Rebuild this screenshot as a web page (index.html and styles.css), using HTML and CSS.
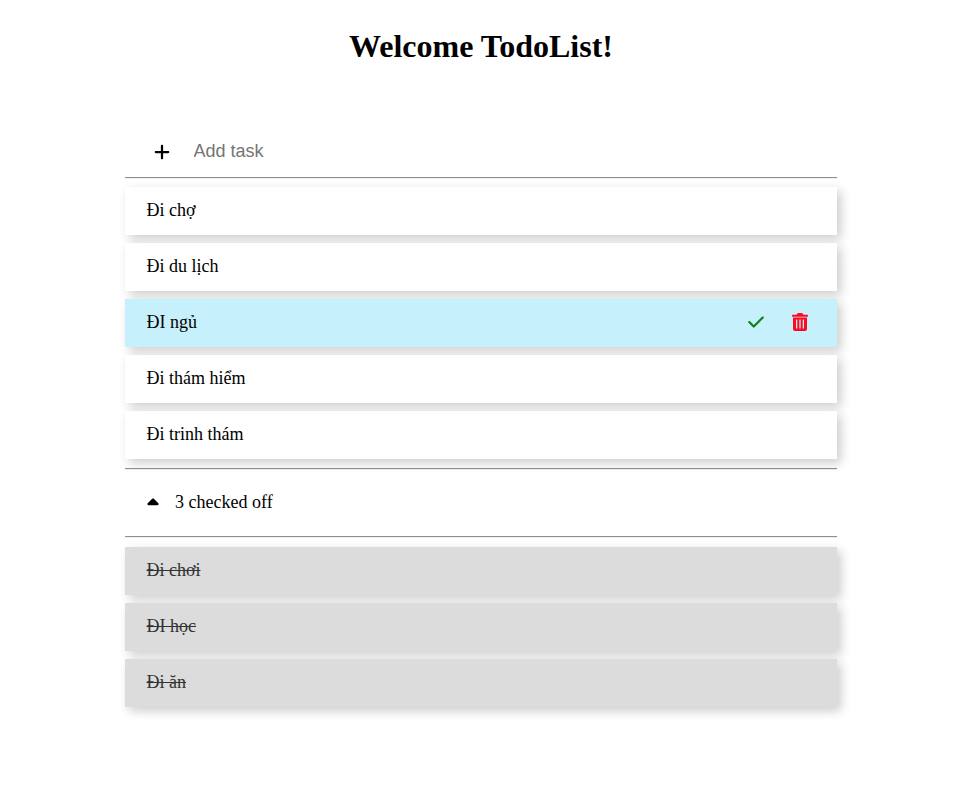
FILE: index.html
```html
<!DOCTYPE html>
<html lang="vi">
<head>
<meta charset="utf-8">
<title>TodoList</title>
<link rel="stylesheet" href="styles.css">
</head>
<body>
<h1 class="title">Welcome TodoList!</h1>
<main class="todo">
  <form class="add">
    <svg class="add-icon" viewBox="0 0 448 512"><path d="M256 80c0-17.700-14.300-32-32-32s-32 14.300-32 32v144H48c-17.700 0-32 14.300-32 32s14.300 32 32 32h144v144c0 17.700 14.300 32 32 32s32-14.300 32-32V288h144c17.700 0 32-14.300 32-32s-14.300-32-32-32H256V80z"/></svg>
    <input class="add-input" type="text" placeholder="Add task">
  </form>
  <hr class="rule">
  <ul class="list">
    <li class="task">Đi chợ</li>
    <li class="task">Đi du lịch</li>
    <li class="task active">ĐI ngủ
      <span class="actions">
        <svg class="check" viewBox="0 0 448 512"><path d="M438.600 105.400c12.500 12.500 12.500 32.800 0 45.300l-256 256c-12.500 12.500-32.800 12.500-45.300 0l-128-128c-12.500-12.500-12.500-32.800 0-45.300s32.800-12.500 45.300 0L160 338.700 393.400 105.400c12.500-12.500 32.800-12.500 45.300 0z"/></svg>
        <svg class="trash" viewBox="0 0 16 18"><path fill-rule="evenodd" d="M5.300.6Q5.600 0 6.300 0h3.400q.7 0 1 .6l.6 1.100h4q.7 0 .7.700v.7q0 .7-.7.700H.7Q0 3.800 0 3.100v-.7q0-.7.700-.7h4zM1 4.500h14V16q0 2-2 2H3q-2 0-2-2zM4 6.500v9h1.300v-9zM7.350 6.500v9h1.300v-9zM10.700 6.500v9H12v-9z"/></svg>
      </span>
    </li>
    <li class="task">Đi thám hiểm</li>
    <li class="task">Đi trinh thám</li>
  </ul>
  <hr class="rule">
  <div class="summary">
    <svg class="caret" viewBox="0 0 320 512"><path d="M182.600 137.400c-12.500-12.500-32.800-12.500-45.300 0l-128 128c-9.200 9.200-11.900 22.900-6.900 34.900S19.100 320 32 320h256c12.900 0 24.600-7.800 29.600-19.800s2.200-25.700-6.900-34.900l-128-128z"/></svg>
    <span>3 checked off</span>
  </div>
  <hr class="rule">
  <ul class="list finished">
    <li class="task done">Đi chơi</li>
    <li class="task done">ĐI học</li>
    <li class="task done">Đi ăn</li>
  </ul>
</main>
</body>
</html>
```
FILE: styles.css
```css
* { box-sizing: border-box; }
body {
  margin: 0;
  padding-top: 28px;
  background: #fff;
  color: #000;
  font-family: "Liberation Serif", "Times New Roman", serif;
  font-size: 18px;
}
.title {
  margin: 0 0 61px;
  padding-left: 4px;
  font-size: 32px;
  line-height: 37px;
  text-align: center;
}
.todo { width: 712px; margin-left: 125px; }
.add {
  display: flex;
  align-items: center;
  height: 51px;
  padding-left: 29px;
}
.add-icon { width: 16px; height: 18px; margin-right: 21.5px; }
.add-input {
  flex: 1;
  border: 0;
  padding: 1px 2px;
  background: transparent;
  font: 18px "Liberation Sans", Arial, sans-serif;
}
.rule { height: 2px; margin: 0; border: 0; border-top: 1px solid #8f8f8f; border-bottom: 1px solid #f0f0f0; }
.list {
  display: grid;
  gap: 8px;
  margin: 0;
  padding: 8px 0 9px;
  list-style: none;
}
.finished { padding-top: 9px; padding-bottom: 40px; }
.task {
  display: flex;
  align-items: center;
  justify-content: space-between;
  height: 48px;
  padding: 0 29px 2px 21.5px;
  background: #fff;
  box-shadow: 4px 4px 10px rgba(0, 0, 0, .2);
}
.active { background: #c7f0fd; }
.actions { display: flex; align-items: center; }
.check { width: 16px; height: 18px; margin-right: 28px; fill: #128016; }
.trash { width: 16px; height: 18px; fill: #ff0820; }
.done { background: #dcdcdc; color: #333; text-decoration: line-through; }
.summary {
  display: flex;
  align-items: center;
  height: 66px;
  padding: 0 0 1px 22px;
}
.caret { width: 12px; height: 18px; margin-right: 16px; }
```
